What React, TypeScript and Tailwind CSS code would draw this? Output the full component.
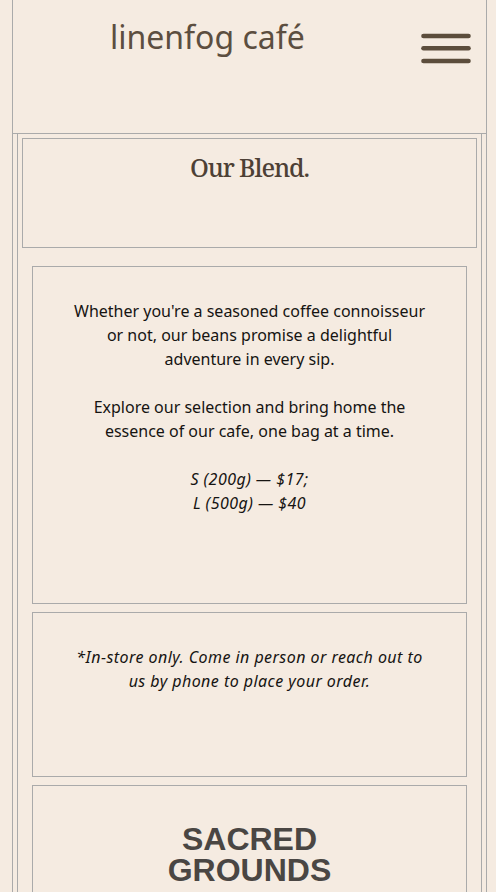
import React from 'react';

const body = { fontFamily: '"Noto Sans", "Liberation Sans", sans-serif' };

const MenuIcon: React.FC = () => (
  <svg width="52" height="34" viewBox="0 0 52 34" fill="none">
    <line x1="3.5" y1="4" x2="48.5" y2="4" stroke="#5c4d3c" strokeWidth="4.6" strokeLinecap="round" />
    <line x1="3.5" y1="16.3" x2="48.5" y2="16.3" stroke="#5c4d3c" strokeWidth="4.6" strokeLinecap="round" />
    <line x1="3.5" y1="29" x2="48.5" y2="29" stroke="#5c4d3c" strokeWidth="4.6" strokeLinecap="round" />
  </svg>
);

const App: React.FC = () => {
  return (
    <div className="min-h-screen bg-[#f5ebe1] overflow-hidden" style={body}>
      <div className="ml-[12px] w-[475px] border-x border-[#aaaaaa]">
        {/* header */}
        <header className="h-[134px] border-b border-[#aaaaaa] flex justify-between items-start pl-[97px] pr-[14px]">
          <h1 className="mt-[17px] text-[32px] leading-[40px] text-[#5c4e40]">linenfog café</h1>
          <div className="mt-[32px]">
            <MenuIcon />
          </div>
        </header>

        <div className="px-[4px]">
          <div className="border-x border-[#aaaaaa] px-[4px] pt-[4px]">
            <div className="h-[110px] border border-[#aaaaaa] pt-[11px] text-center">
              <h2
                className="text-[25px] leading-[34px] font-medium tracking-[-1.1px] text-[#4d4035]"
                style={{ fontFamily: '"Noto Serif", "Liberation Serif", serif' }}
              >
                Our Blend.
              </h2>
            </div>

            <div className="px-[10px] mt-[18px] flex flex-col gap-[8px]">
              <section className="h-[338px] border border-[#aaaaaa] pt-8 text-center text-base leading-6 text-[#161412]">
                <p className="mb-6">
                  Whether you're a seasoned coffee connoisseur
                  <br />
                  or not, our beans promise a delightful
                  <br />
                  adventure in every sip.
                </p>
                <p className="mb-6">
                  Explore our selection and bring home the
                  <br />
                  essence of our cafe, one bag at a time.
                </p>
                <p className="italic tracking-[0.45px]">
                  S (200g) — $17;
                  <br />
                  L (500g) — $40
                </p>
              </section>

              <section className="h-[165px] border border-[#aaaaaa] pt-8 text-center text-base leading-6 italic tracking-[0.45px] text-[#161412]">
                <p>
                  *In-store only. Come in person or reach out to
                  <br />
                  us by phone to place your order.
                </p>
              </section>

              <section className="h-[220px] border border-[#aaaaaa] pt-[38px] text-center">
                <h3
                  className="text-[32px] leading-[31px] font-bold text-[#4a4643]"
                  style={{ fontFamily: '"Liberation Sans", Arial, sans-serif' }}
                >
                  SACRED
                  <br />
                  GROUNDS
                </h3>
              </section>
            </div>
          </div>
        </div>
      </div>
    </div>
  );
};

export default App;
